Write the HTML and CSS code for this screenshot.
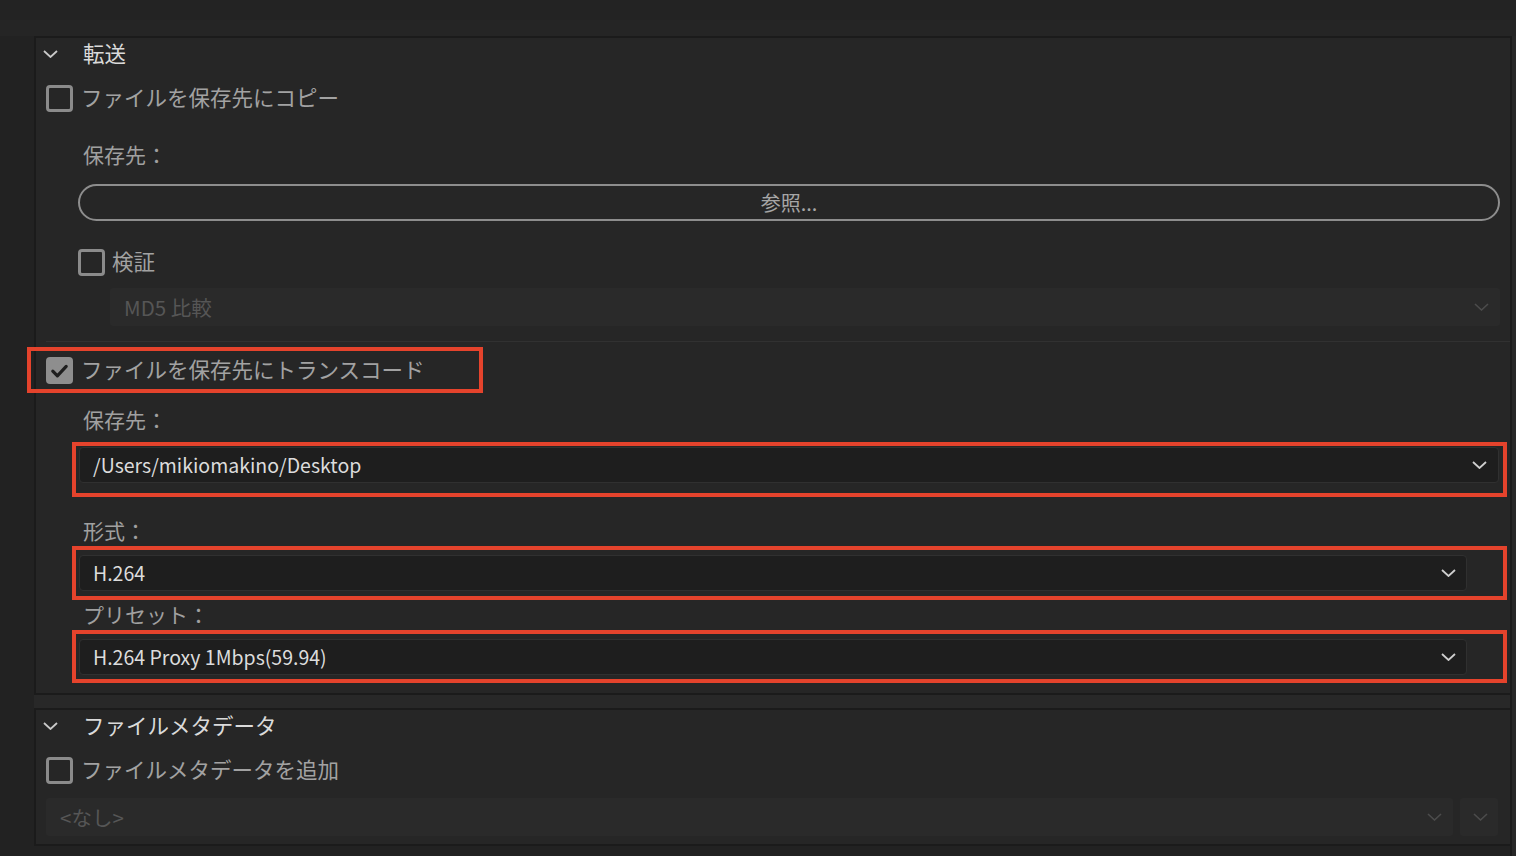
FILE: index.html
```html
<!DOCTYPE html>
<html lang="ja">
<head>
<meta charset="utf-8">
<title>転送</title>
<link rel="stylesheet" href="styles.css">
</head>
<body>
<div class="page">
  <div class="sections">
    <section class="panel panel-transfer">
      <div class="sec-header">
        <svg class="chev-head" width="15" height="8" viewBox="0 0 15 8"><path d="M1 1l6.5 6 6.5-6" fill="none" stroke="currentColor" stroke-width="1.8"/></svg>
        <span class="sec-title">転送</span>
      </div>

      <div class="check-row row-copy">
        <span class="cbox"></span>
        <span class="cb-label">ファイルを保存先にコピー</span>
      </div>

      <div class="field-label lbl-dest1">保存先：</div>
      <div class="pill-btn">参照...</div>

      <div class="check-row row-verify">
        <span class="cbox"></span>
        <span class="cb-label">検証</span>
      </div>

      <div class="select disabled sel-md5">
        <span class="sel-text">MD5 比較</span>
        <svg class="chev" width="15" height="8" viewBox="0 0 15 8"><path d="M1 1l6.5 6 6.5-6" fill="none" stroke="currentColor" stroke-width="1.6"/></svg>
      </div>

      <div class="separator"></div>

      <div class="annot annot-row">
        <div class="check-row row-transcode">
          <span class="cbox checked">
            <svg width="27" height="27" viewBox="0 0 27 27"><path d="M6.8 14.2l4.6 4.6 8.8-9.4" fill="none" stroke="#1f1f1f" stroke-width="3.2" stroke-linecap="round" stroke-linejoin="round"/></svg>
          </span>
          <span class="cb-label">ファイルを保存先にトランスコード</span>
        </div>
      </div>

      <div class="field-label lbl-dest2">保存先：</div>
      <div class="annot annot-a">
        <div class="select sel-path">
          <span class="sel-text">/Users/mikiomakino/Desktop</span>
          <svg class="chev" width="15" height="8" viewBox="0 0 15 8"><path d="M1 1l6.5 6 6.5-6" fill="none" stroke="currentColor" stroke-width="1.8"/></svg>
        </div>
      </div>

      <div class="field-label lbl-format">形式：</div>
      <div class="annot annot-b">
        <div class="select sel-short">
          <span class="sel-text">H.264</span>
          <svg class="chev" width="15" height="8" viewBox="0 0 15 8"><path d="M1 1l6.5 6 6.5-6" fill="none" stroke="currentColor" stroke-width="1.8"/></svg>
        </div>
      </div>

      <div class="field-label lbl-preset">プリセット：</div>
      <div class="annot annot-c">
        <div class="select sel-short">
          <span class="sel-text">H.264 Proxy 1Mbps(59.94)</span>
          <svg class="chev" width="15" height="8" viewBox="0 0 15 8"><path d="M1 1l6.5 6 6.5-6" fill="none" stroke="currentColor" stroke-width="1.8"/></svg>
        </div>
      </div>
    </section>

    <div class="panel-gap"></div>

    <section class="panel panel-meta">
      <div class="sec-header">
        <svg class="chev-head" width="15" height="8" viewBox="0 0 15 8"><path d="M1 1l6.5 6 6.5-6" fill="none" stroke="currentColor" stroke-width="1.8"/></svg>
        <span class="sec-title">ファイルメタデータ</span>
      </div>

      <div class="check-row row-meta">
        <span class="cbox"></span>
        <span class="cb-label">ファイルメタデータを追加</span>
      </div>

      <div class="meta-selects">
        <div class="select disabled sel-none">
          <span class="sel-text">&lt;なし&gt;</span>
          <svg class="chev" width="15" height="8" viewBox="0 0 15 8"><path d="M1 1l6.5 6 6.5-6" fill="none" stroke="currentColor" stroke-width="1.6"/></svg>
        </div>
        <div class="select disabled sel-mini">
          <svg class="chev" width="15" height="8" viewBox="0 0 15 8"><path d="M1 1l6.5 6 6.5-6" fill="none" stroke="currentColor" stroke-width="1.6"/></svg>
        </div>
      </div>
    </section>
  </div>
  <div class="right-strip"></div>
</div>
</body>
</html>
```

FILE: styles.css
```css
*, *::before, *::after { box-sizing: border-box; }

html, body {
  margin: 0;
  padding: 0;
  background: #222222;
  width: 1516px;
  height: 856px;
  overflow: hidden;
  font-family: "Noto Sans CJK JP", "Noto Sans", sans-serif;
}

.page {
  display: flex;
  height: 856px;
  padding-top: 36px;
  background: linear-gradient(#232323 0, #232323 20px, #252525 20px, #252525 36px, #222222 36px);
}

.sections {
  margin-left: 34px;
  width: 1478px;
  border-right: 2px solid #1b1b1b;
  display: flex;
  flex-direction: column;
  background: #282828;
  height: 820px;
}

.right-strip {
  flex: 1;
  background: #272727;
}

.panel {
  background: #262626;
  border: 2px solid #1b1b1b;
  border-right: none;
  display: flex;
  flex-direction: column;
  align-items: flex-start;
}

.panel-transfer { padding-bottom: 18px; }
.panel-meta { padding-bottom: 8px; }

.panel-gap { height: 13px; background: #282828; }

.sections::after {
  content: "";
  flex: 1;
  background: #222222;
}

/* header */
.sec-header {
  height: 32px;
  display: flex;
  align-items: center;
  padding-left: 7px;
}
.chev-head { color: #c9c9c9; display: block; }
.sec-title {
  margin-left: 25px;
  font-size: 21.5px;
  color: #dadada;
  line-height: 1;
  padding-bottom: 2px;
}

/* checkbox rows */
.check-row {
  display: flex;
  align-items: center;
  height: 27px;
}
.cbox {
  width: 27px;
  height: 27px;
  border: 3px solid #8b8b8b;
  border-radius: 4px;
  flex: none;
  display: block;
}
.cbox.checked {
  background: #8e8e8e;
  border: none;
}
.cbox.checked svg { display: block; }
.cb-label {
  font-size: 21.5px;
  color: #a2a2a2;
  line-height: 1;
  margin-left: 8px;
  padding-bottom: 4px;
}

.row-copy { margin-top: 15px; margin-left: 10px; }
.row-verify { margin-top: 28px; margin-left: 42px; }
.row-verify .cb-label { margin-left: 7px; }
.row-transcode { margin-left: 10px; }
.row-meta { margin-top: 15px; margin-left: 10px; }

/* field labels */
.field-label {
  height: 26px;
  display: flex;
  align-items: center;
  margin-left: 47px;
  font-size: 21px;
  color: #a0a0a0;
  line-height: 1;
  padding-bottom: 4px;
}
.lbl-dest1 { margin-top: 31px; }
.lbl-dest2 { margin-top: 24px; }
.lbl-format { margin-top: 36px; }
.lbl-preset { margin-top: 12px; }

/* pill button */
.pill-btn {
  margin-top: 15px;
  margin-left: 42px;
  width: 1422px;
  height: 37px;
  border: 2px solid #8d8d8d;
  border-radius: 19px;
  display: flex;
  align-items: center;
  justify-content: center;
  font-size: 20px;
  color: #a6a6a6;
  line-height: 1;
}

/* selects */
.select {
  display: flex;
  align-items: center;
  justify-content: space-between;
  background: #1e1e1e;
  border: 1px solid #303030;
  border-radius: 4px;
  padding: 0 11px 0 13px;
  height: 36px;
}
.sel-text {
  font-size: 19.5px;
  color: #dcdcdc;
  line-height: 1;
  white-space: nowrap;
}
.chev { color: #cfcfcf; display: block; flex: none; }

.select.disabled {
  background: #2a2a2a;
  border: none;
  border-radius: 3px;
  height: 38px;
  padding-left: 14px;
}
.select.disabled .sel-text { color: #565656; font-size: 20.5px; }
.select.disabled .chev { color: #4c4c4c; }

.sel-md5 {
  margin-top: 12px;
  margin-left: 74px;
  width: 1390px;
}

.separator {
  margin-top: 15px;
  margin-left: 10px;
  width: 1464px;
  height: 1px;
  background: #313131;
}

.sel-path { width: 1420px; padding-right: 11px; }
.sel-short { width: 1388px; padding-right: 10px; }

.meta-selects {
  margin-top: 14px;
  margin-left: 10px;
  display: flex;
  gap: 7px;
}
.sel-none { width: 1407px; padding-right: 11px; }
.sel-mini { width: 38px; padding: 0 11px; justify-content: center; }

/* red annotation frames */
.annot { position: relative; }
.annot::after {
  content: "";
  position: absolute;
  border: 4px solid #e5432c;
  pointer-events: none;
}
.annot-row { margin-top: 15px; }
.annot-row::after { left: -9px; top: -10px; width: 456px; height: 46px; }

.annot-a { margin-top: 13px; margin-left: 43px; }
.annot-a::after { left: -7px; top: -5px; right: -8px; bottom: -14px; }

.annot-b { margin-top: 10px; margin-left: 43px; }
.annot-b::after { left: -7px; top: -9px; right: -40px; bottom: -9px; }

.annot-c { margin-top: 10px; margin-left: 43px; }
.annot-c::after { left: -7px; top: -9px; right: -40px; bottom: -8px; }
```
